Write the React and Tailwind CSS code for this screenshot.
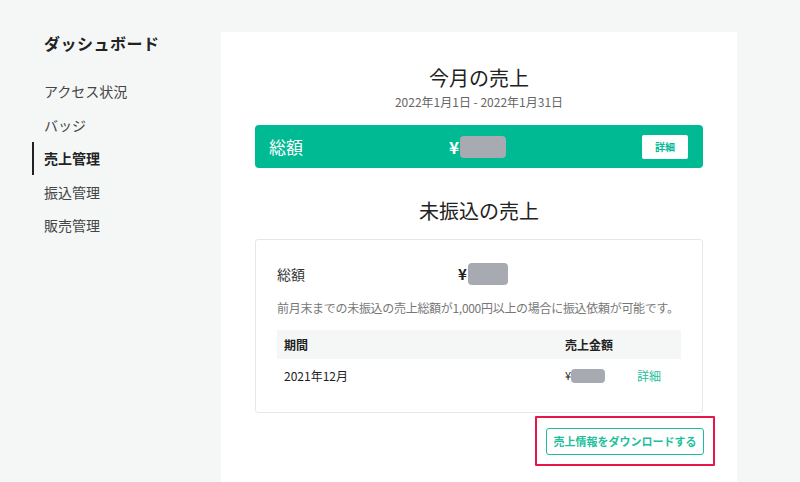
import React from "react";

const font = { fontFamily: '"Noto Sans CJK JP", "Noto Sans", sans-serif' };

function Masked({ className }) {
  return <span className={`inline-block rounded-[4px] bg-[#a7aab0] ${className}`} />;
}

const nav = [
  { label: "アクセス状況" },
  { label: "バッジ" },
  { label: "売上管理", active: true },
  { label: "振込管理" },
  { label: "販売管理" },
];

export default function App() {
  return (
    <div style={font} className="flex h-[482px] w-[800px] overflow-hidden bg-[#f5f7f7] text-[#222]">
      <aside className="w-[221px] shrink-0 pl-[32px] pt-[31px]">
        <h1 className="pl-[12px] text-[16px] font-bold leading-[24px] tracking-[0.5px]">ダッシュボード</h1>
        <ul className="mt-[24px] flex flex-col gap-[9.5px]">
          {nav.map((n) => (
            <li
              key={n.label}
              className={`h-[24px] pl-[10px] text-[14px] leading-[24px] ${
                n.active ? "border-l-2 border-[#222] font-bold text-[#222] h-[33px] leading-[33px] -my-[4.5px]" : "border-l-2 border-transparent text-[#444]"
              }`}
            >
              {n.label}
            </li>
          ))}
        </ul>
      </aside>

      <main className="mt-[32px] w-[516px] shrink-0 bg-white px-[34px] pt-[32px]">
        <section className="flex flex-col items-center">
          <h2 className="text-[20px] leading-[28px] text-[#222]">今月の売上</h2>
          <p className="mt-[2px] text-[12px] leading-[16px] text-[#666]">2022年1月1日 - 2022年1月31日</p>
        </section>

        <div className="mt-[15px] flex h-[43px] items-center rounded-[4px] bg-[#00ba94] pl-[14px] pr-[15px]">
          <span className="w-[180px] text-[17px] text-white">総額</span>
          <span className="flex items-center">
            <span className="text-[17px] font-bold text-white">¥</span>
            <Masked className="ml-[1px] h-[22px] w-[46px]" />
          </span>
          <button className="ml-auto h-[24px] w-[46px] rounded-[2px] bg-white text-[10px] font-bold text-[#00ba94]">詳細</button>
        </div>

        <h2 className="mt-[29px] text-center text-[20px] leading-[28px] text-[#222]">未振込の売上</h2>

        <div className="mt-[14px] rounded-[3px] border border-[#e6e8e8] px-[21px] pb-[20px] pt-[22px]">
          <div className="flex h-[24px] items-center">
            <span className="w-[181px] text-[14px] text-[#333]">総額</span>
            <span className="flex items-center">
              <span className="text-[15px] font-bold text-[#222]">¥</span>
              <Masked className="ml-[1px] h-[22px] w-[40px]" />
            </span>
          </div>
          <p className="mt-[13px] whitespace-nowrap text-[12px] leading-[18px] tracking-[-0.3px] text-[#777]">
            前月末までの未振込の売上総額が1,000円以上の場合に振込依頼が可能です。
          </p>
          <table className="mt-[13px] w-full border-collapse text-[12px]">
            <thead>
              <tr className="h-[29px] bg-[#f5f7f7]">
                <th className="pl-[7px] text-left font-bold text-[#222]">期間</th>
                <th className="w-[116px] text-left font-bold text-[#222]">売上金額</th>
              </tr>
            </thead>
            <tbody>
              <tr className="h-[33px]">
                <td className="pl-[7px] text-[#222]">2021年12月</td>
                <td>
                  <span className="flex items-center">
                    <span className="text-[11px] text-[#222]">¥</span>
                    <Masked className="h-[14px] w-[34px]" />
                    <span className="ml-[32px] text-[12px] text-[#1dbf9a]">詳細</span>
                  </span>
                </td>
              </tr>
            </tbody>
          </table>
        </div>

        <div className="mt-[3px] flex justify-end">
          <div className="-mr-[12px] rounded-[1px] border-2 border-[#e8174b] px-[9px] py-[9px]">
            <button className="h-[27px] w-[158px] rounded-[3px] border border-[#1dbf9a] bg-white text-[11px] font-bold text-[#1dbf9a]">
              売上情報をダウンロードする
            </button>
          </div>
        </div>
      </main>
    </div>
  );
}
